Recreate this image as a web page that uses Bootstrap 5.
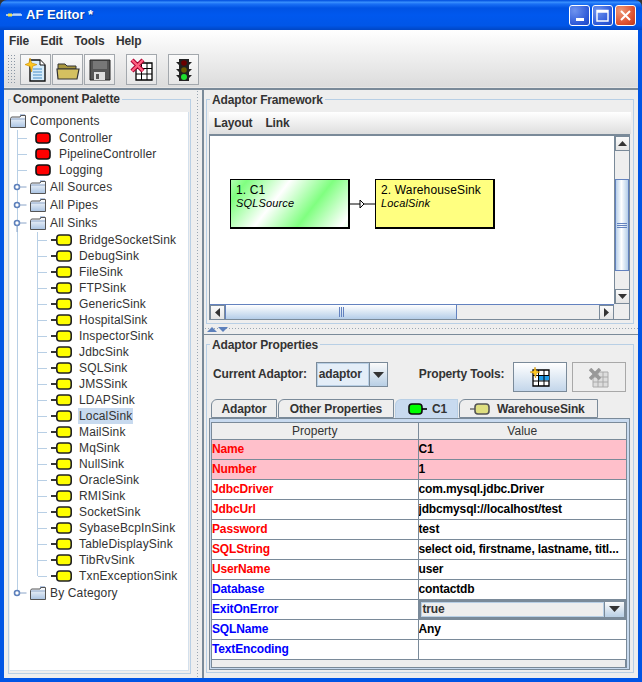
<!DOCTYPE html>
<html lang="en">
<head>
  <meta charset="UTF-8" />
  <meta name="viewport" content="width=device-width, initial-scale=1.0" />
  <title>AF Editor *</title>
  <link href="https://cdn.jsdelivr.net/npm/bootstrap@5.3.0/dist/css/bootstrap.min.css" rel="stylesheet">
  <style>
    html, body { margin: 0; background: #333; overflow: hidden; }
    body { font: 12px/16px "Liberation Sans", Arial, sans-serif; color: #333; }
    .app { width: 642px; height: 682px; }

    /* title bar */
    .titlebar {
      height: 30px; padding: 0 6px; color: #fff; border-radius: 7px 7px 0 0;
      background: linear-gradient(#0a5ae4 0, #0a5ae4 1px, #3d95ff 2px, #1a70f5 4px, #0053e4 8px, #0058ee 50%, #0056e8 85%, #0046c4 100%);
    }
    .title-text { font-size: 13px; font-weight: 700; margin-left: 4px; text-shadow: 1px 1px 0 #003a9e; }
    .win-btn {
      width: 21px; height: 21px; border: 1px solid #fff; border-radius: 3px; margin-left: 2px; padding: 0;
      background: radial-gradient(circle at 25% 25%, #6f93ee, #2c58d8 70%, #2048c0);
    }
    .win-btn.close { background: radial-gradient(circle at 25% 25%, #ee9a78, #dc5030 65%, #b93818); }

    /* window client area */
    .client { border: solid #0055e5; border-width: 0 4px 4px; background: #eee; height: 652px; }
    .top-bars { background: linear-gradient(#fff, #f6f6f6 25%, #dcdcdc 98%, #eee); border-bottom: 2px solid #7a8a99; height: 60px; }
    .menubar { height: 22px; padding-left: 5px; gap: 11.5px; }
    .menubar .nav-link, .pane-menu .nav-link { padding: 0; color: #333; font-weight: 700; font-size: 12px; letter-spacing: -.15px; }
    .toolbar { height: 36px; padding: 2px 0 0 3px; }
    .grip { width: 9px; height: 31px; margin-right: 4px; background: radial-gradient(circle, #8a96a4 40%, transparent 45%) 0 0/3px 3px; }
    .tool-btn {
      width: 31px; height: 31px; padding: 0; margin-right: 1px; border: 1px solid #a3a8ad; border-radius: 0;
      background: linear-gradient(#fafafa, #e6e6e6);
    }
    .tool-btn.spaced { margin-left: 10px; }

    /* titled borders */
    .titled { border: 1px solid #b8cfe5; }
    .titled-label { display: block; width: fit-content; margin: -9px 0 0 1px; padding: 0 2px; background: #eee; font-weight: 700; font-size: 12px; line-height: 16px; letter-spacing: -.15px; }
    .right .titled-label { margin-top: -8px; }

    /* left palette */
    .palette { width: 189px; padding: 9px 2px 4px 4px; }
    .palette .titled { height: 575px; padding: 0 1px 2px 1px; }
    .tree { background: #fff; height: 559px; margin-top: 5px; font-size: 12px; letter-spacing: .15px; border: solid #d4e0ec; border-width: 0 1px 1px 0; }
    .tree-row { height: 16px; }
    .tree-row.tall { height: 18px; }
    .tree-row span { line-height: 16px; padding: 0 1px; }
    /* tree guide lines drawn as backgrounds */
    .g-leaf {
      padding-left: 25px;
      background:
        linear-gradient(#b8cfe5, #b8cfe5) 7px 0/1px 100% no-repeat,
        linear-gradient(#b8cfe5, #b8cfe5) 8px 50%/9px 1px no-repeat;
    }
    .g-folder { padding-left: 20px; background: linear-gradient(#b8cfe5, #b8cfe5) 7px 0/1px 100% no-repeat; }
    .g-sink {
      padding-left: 41px;
      background:
        linear-gradient(#b8cfe5, #b8cfe5) 7px 0/1px 100% no-repeat,
        linear-gradient(#b8cfe5, #b8cfe5) 27px 0/1px 100% no-repeat,
        linear-gradient(#b8cfe5, #b8cfe5) 28px 50%/9px 1px no-repeat;
    }
    .g-sink.last {
      background:
        linear-gradient(#b8cfe5, #b8cfe5) 7px 0/1px 100% no-repeat,
        linear-gradient(#b8cfe5, #b8cfe5) 27px 0/1px 50% no-repeat,
        linear-gradient(#b8cfe5, #b8cfe5) 28px 50%/9px 1px no-repeat;
    }
    .g-last { padding-left: 20px; background: linear-gradient(#b8cfe5, #b8cfe5) 7px 0/1px 50% no-repeat; }
    .tree-ic { flex: none; }
    .folder-ic { margin-right: 3px; }
    .pill-ic { margin-right: 7px; }
    .g-sink .pill-ic { margin-right: 6px; }
    .handle { margin-left: -17px; margin-right: 2px; }
    .selected { background: #c8daef; }

    /* splitters */
    .split-v { width: 9px; background: radial-gradient(circle, #9aa6b2 40%, transparent 45%) 3px 0/3px 3px repeat-y; }
    .split-h { height: 10px; margin-top: 1px; padding: 0 0 0 3px; border-bottom: 1px solid #7a8a99; background: radial-gradient(circle, #9aa6b2 40%, transparent 45%) 0 2px/3px 3px repeat-x; background-color: #eee; }

    /* right side */
    .right { width: 436px; border-left: 2px solid #7a8a99; }
    .framework { margin: 9px 4px 0 2px; height: 225px; padding: 0 2px 3px 2px; }
    .pane-menu { height: 22px; margin-top: 4px; padding-left: 5px; gap: 13px; background: linear-gradient(#fff, #dedede); }
    .canvas-box { width: 421px; height: 186px; border: solid #7a8a99; border-width: 2px 1px 1px 1px; }
    .canvas { position: relative; background: #fff; width: 405px; height: 168px; }
    .node { position: absolute; top: 43px; width: 120px; height: 50px; padding: 3px 5px; border: 1px solid #000; border-width: 1px 2px 2px 1px; color: #000; letter-spacing: .15px; }
    .node div { font-size: 12px; line-height: 14px; }
    .node i { display: block; font-size: 11px; line-height: 12px; }
    .node-green { left: 20px; background: repeating-linear-gradient(128deg, #fff -21px, #80ff80 13px, #fff 47px); }
    .node-yellow { left: 165px; background: #ffff80; }
    .link { position: absolute; left: 140px; top: 60px; }
    .sb-btn { width: 15px; height: 15px; background: linear-gradient(#fafafa, #e4e4e4); border: 1px solid #7a8a99; flex: none; }
    .sb-v { width: 15px; height: 168px; border-left: 1px solid #7a8a99; }
    .sb-gap { height: 28px; }
    .sb-h { height: 15px; border-top: 1px solid #6382bf; width: 404px; }
    .thumb-v { height: 92px; background: linear-gradient(90deg, #b8d0ea, #fff 45%, #b4cde8); border: 1px solid #6382bf; }
    .thumb-h { width: 232px; background: linear-gradient(#fff, #b4cde8); border: 1px solid #6382bf; border-width: 0 1px; }

    .properties { margin: 9px 4px 0 2px; height: 329px; padding: 0 2px 2px 2px; }
    .prop-tools { height: 30px; margin-top: 9px; padding-left: 4px; font-weight: 700; font-size: 12px; line-height: 25px; letter-spacing: -.15px; }
    .combo { height: 25px; width: 72px; border: 1px solid #7a8a99; background: #e4eef8; margin: 0 31px 0 9px; }
    .combo > span { flex: 1; border: 1px solid #b8cfe5; padding-left: 1px; line-height: 21px; }
    .combo-arrow { width: 18px; border-left: 1px solid #7a8a99; background: linear-gradient(#fafafa, #b8cfe5); }
    .prop-btn { width: 54px; height: 30px; padding: 0; border: 1px solid #7a8a99; border-radius: 0; background: linear-gradient(#fff, #c3d6ea); margin-left: 5px; }
    .prop-btn.off { border-color: #a8a8a8; background: #eee; opacity: 1; }
    .prop-btn:first-of-type { margin-left: 9px; }

    .nav-tabs.prop-tabs { border: 0; height: 19px; margin: 7px 0 0 2px; gap: 1px; flex-wrap: nowrap; }
    .prop-tabs .nav-link {
      height: 19px; padding: 0; font-weight: 700; font-size: 12px; line-height: 18px; color: #333; white-space: nowrap; letter-spacing: -.15px; text-align: center;
      border: 1px solid #7a8a99; border-radius: 6px 0 0 0; background: #eee; margin: 0;
    }
    .prop-tabs .nav-link.active { background: #c8daef; color: #333; border-color: #b8cfe5 #b8cfe5 #c8daef; }
    .tab-adaptor { width: 66px; }
    .tab-other { width: 116px; }
    .prop-tabs .tab-c1 { width: 63px; padding-left: 12px; }
    .prop-tabs .tab-sink { width: 139px; padding-left: 10px; }
    .tab-c1 span { margin-left: 5px; }
    .tab-sink span { margin-left: 7px; }
    .tab-pane-box { width: 421px; height: 252px; border: 1px solid #7a8a99; background: #c8daef; padding: 3px 2px 2px 1px; }
    .table-wrap { height: 246px; border: 1px solid #7a8a99; border-width: 1px 2px 1px 1px; background: #eee; width: 416px; }
    .prop-table { width: 414px; table-layout: fixed; --bs-table-border-color: #7a8a99; --bs-table-bg: #fff; margin: 0; vertical-align: middle; }
    .prop-table thead tr { border-top-width: 0; }
    .prop-table th { height: 16px; padding: 0; font-weight: 400; text-align: center; background: #eee; color: #333; font-size: 12px; line-height: 15px; }
    .prop-table td { height: 20px; padding: 0; font-weight: 700; font-size: 12px; line-height: 18px; color: #000; white-space: nowrap; overflow: hidden; letter-spacing: -.15px; }
    .prop-table tr > :first-child { border-left-width: 0; }
    .prop-table tr > :last-child { border-right-width: 0; }
    .prop-table td.req { color: #f00; }
    .prop-table td.opt { color: #00f; }
    .prop-table tr.key td { background: #ffc0cb; }
    .col-name { width: 206px; }
    .cell-combo { height: 19px; border: 2px solid #7a8a99; background: #eee; color: #333; }
    .cell-combo span { flex: 1; border: 1px solid #b8cfe5; padding-left: 1px; line-height: 13px; }
    .cell-combo .combo-arrow { flex: none; width: 20px; border-left: 1px solid #7a8a99; }
  </style>
</head>
<body>
<!-- shared icons -->
<svg width="0" height="0" class="d-block">
  <defs>
    <linearGradient id="fold" x1="0" y1="0" x2="0" y2="1"><stop offset="0" stop-color="#fff"/><stop offset="1" stop-color="#a9c3e2"/></linearGradient>
  </defs>
  <symbol id="folder" viewBox="0 0 16 14">
    <path d="M10 0.5h5v2h-5z" fill="#6f8fc0"/>
    <path d="M0.5 4.5L1.5 3h8.500l1-1.500h4.500v12h-15z" fill="url(#fold)" stroke="#555"/>
    <path d="M1 5h14" stroke="#8aa4c8"/>
  </symbol>
  <symbol id="pill-red" viewBox="0 0 16 12"><rect x="1" y="1" width="14" height="10" rx="3" fill="#f00" stroke="#111" stroke-width="1.6"/></symbol>
  <symbol id="pill-yellow" viewBox="0 0 21 12">
    <path d="M0 6h5" stroke="#000" stroke-width="1.6"/>
    <rect x="5.8" y="1" width="14.4" height="10" rx="3" fill="#ff0" stroke="#222" stroke-width="1.6"/>
  </symbol>
  <symbol id="h-closed" viewBox="0 0 15 10">
    <circle cx="4" cy="5" r="2.5" fill="#fff" stroke="#5d80bb" stroke-width="1.6"/><path d="M6.500 5h7" stroke="#8aa4c8"/>
  </symbol>
  <symbol id="h-open" viewBox="0 0 15 18">
    <circle cx="4" cy="9" r="2.5" fill="#fff" stroke="#5d80bb" stroke-width="1.6"/><path d="M4 11.500v6.500M6.500 9h7" stroke="#8aa4c8"/>
  </symbol>
  <symbol id="arrow-down" viewBox="0 0 11 6"><path d="M0 0h11L5.500 6z" fill="#333"/></symbol>
</svg>

<div class="app d-flex flex-column">
  <div class="titlebar d-flex align-items-center">
    <svg width="16" height="8" viewBox="0 0 16 8"><path d="M0 4h16" stroke="#9cc3f5" stroke-width="2"/><path d="M2 4h4" stroke="#f0e050" stroke-width="3"/><path d="M7 3h8" stroke="#d8e8ff"/></svg>
    <span class="title-text">AF Editor *</span>
    <div class="ms-auto d-flex">
      <div class="win-btn d-flex align-items-end justify-content-center pb-1"><svg width="8" height="3"><rect width="8" height="3" fill="#fff"/></svg></div>
      <div class="win-btn d-flex align-items-center justify-content-center"><svg width="13" height="13"><path d="M1 1.500h11v10.500h-11zM1 3h11" fill="none" stroke="#fff" stroke-width="1.4"/></svg></div>
      <div class="win-btn close d-flex align-items-center justify-content-center"><svg width="13" height="13"><path d="M2 2l9 9M11 2l-9 9" stroke="#fff" stroke-width="2"/></svg></div>
    </div>
  </div>

  <div class="client d-flex flex-column">
    <div class="top-bars">
      <ul class="nav menubar align-items-center">
        <li class="nav-item"><a class="nav-link" href="#">File</a></li>
        <li class="nav-item"><a class="nav-link" href="#">Edit</a></li>
        <li class="nav-item"><a class="nav-link" href="#">Tools</a></li>
        <li class="nav-item"><a class="nav-link" href="#">Help</a></li>
      </ul>
      <div class="toolbar d-flex">
        <div class="grip"></div>
        <button class="btn tool-btn">
          <svg width="24" height="26" viewBox="0 0 24 26"><path d="M6 3h10l5 5v16h-15z" fill="#d6ecfa" stroke="#111" stroke-width="1.4"/><path d="M16 3v5h5" fill="#fff" stroke="#111"/><path d="M9 12h9M9 15h9M9 18h9M9 21h9" stroke="#4a90c8"/><path d="M6 1l1.600 5L13 7.600 8.600 9.200 7.600 15 6 9.400 1 7.600 5 6z" fill="#ffc820" stroke="#c88a00" stroke-width=".6"/></svg>
        </button>
        <button class="btn tool-btn">
          <svg width="24" height="22" viewBox="0 0 24 22"><path d="M2 5h7l2 2h9v3h-18z" fill="#a8963e" stroke="#333"/><path d="M1 10h22l-2 10h-19z" fill="#d4c060" stroke="#333" stroke-width="1.2"/></svg>
        </button>
        <button class="btn tool-btn">
          <svg width="24" height="24" viewBox="0 0 24 24"><path d="M2 2h20v20h-20z" fill="#555" stroke="#222"/><path d="M5 3h14v8h-14z" fill="#777"/><path d="M6 14h11v8h-11z" fill="#ddd"/><path d="M8 16h3v5h-3z" fill="#555"/></svg>
        </button>
        <button class="btn tool-btn spaced">
          <svg width="24" height="24" viewBox="0 0 24 24"><path d="M6 5h16v17h-16z" fill="#fff" stroke="#000" stroke-width="1.3"/><path d="M6 10.500h16M6 16h16M11.500 5v17M17 5v17" stroke="#000"/><path d="M2 2l11 11M13 2l-11 11" stroke="#a80030" stroke-width="4.4"/><path d="M2 2l11 11M13 2l-11 11" stroke="#ff6080" stroke-width="2.4"/></svg>
        </button>
        <button class="btn tool-btn spaced">
          <svg width="18" height="24" viewBox="0 0 18 24"><path d="M4 1h10v22h-10z" fill="#222"/><path d="M1 4h3l0 3zM17 4h-3v3zM1 11h3v3zM17 11h-3v3zM1 17h3v3zM17 17h-3v3z" fill="#222"/><circle cx="9" cy="5" r="2.8" fill="#6a0000"/><circle cx="9" cy="12" r="2.8" fill="#6a5a00"/><circle cx="9" cy="19" r="3" fill="#20e030"/></svg>
        </button>
      </div>
    </div>

    <div class="d-flex flex-grow-1">
      <div class="palette">
        <div class="titled">
          <span class="titled-label">Component Palette</span>
          <div class="tree">
            <div class="tree-row tall d-flex align-items-center"><svg class="tree-ic folder-ic" width="16" height="14"><use href="#folder"/></svg><span>Components</span></div>
            <div class="tree-row g-leaf d-flex align-items-center"><svg class="tree-ic pill-ic" width="16" height="12"><use href="#pill-red"/></svg><span>Controller</span></div>
            <div class="tree-row g-leaf d-flex align-items-center"><svg class="tree-ic pill-ic" width="16" height="12"><use href="#pill-red"/></svg><span>PipelineController</span></div>
            <div class="tree-row g-leaf d-flex align-items-center"><svg class="tree-ic pill-ic" width="16" height="12"><use href="#pill-red"/></svg><span>Logging</span></div>
            <div class="tree-row tall g-folder d-flex align-items-center"><svg class="tree-ic handle" width="15" height="10"><use href="#h-closed"/></svg><svg class="tree-ic folder-ic" width="16" height="14"><use href="#folder"/></svg><span>All Sources</span></div>
            <div class="tree-row tall g-folder d-flex align-items-center"><svg class="tree-ic handle" width="15" height="10"><use href="#h-closed"/></svg><svg class="tree-ic folder-ic" width="16" height="14"><use href="#folder"/></svg><span>All Pipes</span></div>
            <div class="tree-row tall g-folder d-flex align-items-center"><svg class="tree-ic handle" width="15" height="18"><use href="#h-open"/></svg><svg class="tree-ic folder-ic" width="16" height="14"><use href="#folder"/></svg><span>All Sinks</span></div>
            <div class="tree-row g-sink d-flex align-items-center"><svg class="tree-ic pill-ic" width="21" height="12"><use href="#pill-yellow"/></svg><span>BridgeSocketSink</span></div>
            <div class="tree-row g-sink d-flex align-items-center"><svg class="tree-ic pill-ic" width="21" height="12"><use href="#pill-yellow"/></svg><span>DebugSink</span></div>
            <div class="tree-row g-sink d-flex align-items-center"><svg class="tree-ic pill-ic" width="21" height="12"><use href="#pill-yellow"/></svg><span>FileSink</span></div>
            <div class="tree-row g-sink d-flex align-items-center"><svg class="tree-ic pill-ic" width="21" height="12"><use href="#pill-yellow"/></svg><span>FTPSink</span></div>
            <div class="tree-row g-sink d-flex align-items-center"><svg class="tree-ic pill-ic" width="21" height="12"><use href="#pill-yellow"/></svg><span>GenericSink</span></div>
            <div class="tree-row g-sink d-flex align-items-center"><svg class="tree-ic pill-ic" width="21" height="12"><use href="#pill-yellow"/></svg><span>HospitalSink</span></div>
            <div class="tree-row g-sink d-flex align-items-center"><svg class="tree-ic pill-ic" width="21" height="12"><use href="#pill-yellow"/></svg><span>InspectorSink</span></div>
            <div class="tree-row g-sink d-flex align-items-center"><svg class="tree-ic pill-ic" width="21" height="12"><use href="#pill-yellow"/></svg><span>JdbcSink</span></div>
            <div class="tree-row g-sink d-flex align-items-center"><svg class="tree-ic pill-ic" width="21" height="12"><use href="#pill-yellow"/></svg><span>SQLSink</span></div>
            <div class="tree-row g-sink d-flex align-items-center"><svg class="tree-ic pill-ic" width="21" height="12"><use href="#pill-yellow"/></svg><span>JMSSink</span></div>
            <div class="tree-row g-sink d-flex align-items-center"><svg class="tree-ic pill-ic" width="21" height="12"><use href="#pill-yellow"/></svg><span>LDAPSink</span></div>
            <div class="tree-row g-sink d-flex align-items-center"><svg class="tree-ic pill-ic" width="21" height="12"><use href="#pill-yellow"/></svg><span class="selected">LocalSink</span></div>
            <div class="tree-row g-sink d-flex align-items-center"><svg class="tree-ic pill-ic" width="21" height="12"><use href="#pill-yellow"/></svg><span>MailSink</span></div>
            <div class="tree-row g-sink d-flex align-items-center"><svg class="tree-ic pill-ic" width="21" height="12"><use href="#pill-yellow"/></svg><span>MqSink</span></div>
            <div class="tree-row g-sink d-flex align-items-center"><svg class="tree-ic pill-ic" width="21" height="12"><use href="#pill-yellow"/></svg><span>NullSink</span></div>
            <div class="tree-row g-sink d-flex align-items-center"><svg class="tree-ic pill-ic" width="21" height="12"><use href="#pill-yellow"/></svg><span>OracleSink</span></div>
            <div class="tree-row g-sink d-flex align-items-center"><svg class="tree-ic pill-ic" width="21" height="12"><use href="#pill-yellow"/></svg><span>RMISink</span></div>
            <div class="tree-row g-sink d-flex align-items-center"><svg class="tree-ic pill-ic" width="21" height="12"><use href="#pill-yellow"/></svg><span>SocketSink</span></div>
            <div class="tree-row g-sink d-flex align-items-center"><svg class="tree-ic pill-ic" width="21" height="12"><use href="#pill-yellow"/></svg><span>SybaseBcpInSink</span></div>
            <div class="tree-row g-sink d-flex align-items-center"><svg class="tree-ic pill-ic" width="21" height="12"><use href="#pill-yellow"/></svg><span>TableDisplaySink</span></div>
            <div class="tree-row g-sink d-flex align-items-center"><svg class="tree-ic pill-ic" width="21" height="12"><use href="#pill-yellow"/></svg><span>TibRvSink</span></div>
            <div class="tree-row g-sink last d-flex align-items-center"><svg class="tree-ic pill-ic" width="21" height="12"><use href="#pill-yellow"/></svg><span>TxnExceptionSink</span></div>
            <div class="tree-row tall g-last d-flex align-items-center"><svg class="tree-ic handle" width="15" height="10"><use href="#h-closed"/></svg><svg class="tree-ic folder-ic" width="16" height="14"><use href="#folder"/></svg><span>By Category</span></div>
          </div>
        </div>
      </div>

      <div class="split-v"></div>

      <div class="right d-flex flex-column">
        <div class="titled framework">
          <span class="titled-label">Adaptor Framework</span>
          <ul class="nav pane-menu align-items-center">
            <li class="nav-item"><a class="nav-link" href="#">Layout</a></li>
            <li class="nav-item"><a class="nav-link" href="#">Link</a></li>
          </ul>
          <div class="canvas-box">
            <div class="d-flex">
              <div class="canvas">
                <div class="node node-green"><div>1. C1</div><i>SQLSource</i></div>
                <svg class="link" width="26" height="16" viewBox="0 0 26 16"><path d="M0 8h25" stroke="#000"/><path d="M10 4v8l4-4z" fill="#fff" stroke="#000"/></svg>
                <div class="node node-yellow"><div>2. WarehouseSink</div><i>LocalSink</i></div>
              </div>
              <div class="sb-v d-flex flex-column">
                <div class="sb-btn d-flex align-items-center justify-content-center"><svg width="9" height="5"><path d="M0 5h9L4.500 0z" fill="#333"/></svg></div>
                <div class="sb-gap"></div>
                <div class="thumb-v d-flex align-items-center justify-content-center"><svg width="10" height="5"><path d="M0 .5h10M0 2.500h10M0 4.500h10" stroke="#6382bf"/></svg></div>
                <div class="flex-grow-1"></div>
                <div class="sb-btn d-flex align-items-center justify-content-center"><svg width="9" height="5"><use href="#arrow-down"/></svg></div>
              </div>
            </div>
            <div class="sb-h d-flex">
              <div class="sb-btn d-flex align-items-center justify-content-center"><svg width="5" height="9"><path d="M5 0v9L0 4.500z" fill="#333"/></svg></div>
              <div class="thumb-h d-flex align-items-center justify-content-center"><svg width="5" height="10"><path d="M.5 0v10M2.500 0v10M4.500 0v10" stroke="#6382bf"/></svg></div>
              <div class="flex-grow-1"></div>
              <div class="sb-btn d-flex align-items-center justify-content-center"><svg width="5" height="9"><path d="M0 0v9l5-4.500z" fill="#333"/></svg></div>
            </div>
          </div>
        </div>

        <div class="split-h d-flex align-items-center">
          <svg width="21" height="5" viewBox="0 0 21 5"><path d="M0 5h10L5 0z" fill="#5d80bb"/><path d="M11 0h10l-5 5z" fill="#5d80bb"/></svg>
        </div>

        <div class="titled properties">
          <span class="titled-label">Adaptor Properties</span>
          <div class="prop-tools d-flex">
            <span>Current Adaptor:</span>
            <div class="combo d-flex">
              <span>adaptor</span>
              <div class="combo-arrow d-flex align-items-center justify-content-center"><svg width="11" height="6"><use href="#arrow-down"/></svg></div>
            </div>
            <span>Property Tools:</span>
            <button class="btn prop-btn">
              <svg width="20" height="22" viewBox="0 0 20 22"><path d="M3 3h16v16h-16z" fill="#fff" stroke="#000" stroke-width="1.3"/><path d="M8.500 8.500h10.500v5h-10.500z" fill="#1e9be8"/><path d="M3 8.500h16M3 14h16M8.500 3v16M14 3v16" stroke="#000"/><path d="M5 0l1.300 4L10 5 6.500 6.200 5.500 11 4 6.500 0 5l3.800-1z" fill="#ffc820" stroke="#c88a00" stroke-width=".5"/></svg>
            </button>
            <button class="btn prop-btn off" disabled>
              <svg width="20" height="20" viewBox="0 0 20 20"><path d="M4 4h15v15h-15z" fill="#ddd" stroke="#aaa"/><path d="M4 9h15M4 14h15M9 4v15M14 4v15" stroke="#aaa"/><path d="M1 1l10 10M11 1l-10 10" stroke="#999" stroke-width="3.500"/></svg>
            </button>
          </div>

          <ul class="nav nav-tabs prop-tabs">
            <li class="nav-item"><a class="nav-link tab-adaptor" href="#">Adaptor</a></li>
            <li class="nav-item"><a class="nav-link tab-other" href="#">Other Properties</a></li>
            <li class="nav-item">
              <a class="nav-link active tab-c1 d-flex align-items-center" href="#">
                <svg width="19" height="12" viewBox="0 0 19 12"><rect x="1" y="1" width="13" height="10" rx="3" fill="#0f0" stroke="#111" stroke-width="1.600"/><path d="M14 6h5" stroke="#000" stroke-width="1.600"/></svg><span>C1</span>
              </a>
            </li>
            <li class="nav-item">
              <a class="nav-link tab-sink d-flex align-items-center" href="#">
                <svg width="20" height="12" viewBox="0 0 20 12"><path d="M0 6h5" stroke="#777" stroke-width="1.600"/><rect x="5" y="1" width="14" height="10" rx="3" fill="#dfdf80" stroke="#555" stroke-width="1.600"/></svg><span>WarehouseSink</span>
              </a>
            </li>
          </ul>
          <div class="tab-pane-box">
            <div class="table-wrap">
              <table class="table table-bordered prop-table">
                <colgroup><col class="col-name"><col></colgroup>
                <thead><tr><th>Property</th><th>Value</th></tr></thead>
                <tbody>
                  <tr class="key"><td class="req">Name</td><td>C1</td></tr>
                  <tr class="key"><td class="req">Number</td><td>1</td></tr>
                  <tr><td class="req">JdbcDriver</td><td>com.mysql.jdbc.Driver</td></tr>
                  <tr><td class="req">JdbcUrl</td><td>jdbcmysql://localhost/test</td></tr>
                  <tr><td class="req">Password</td><td>test</td></tr>
                  <tr><td class="req">SQLString</td><td>select oid, firstname, lastname, titl...</td></tr>
                  <tr><td class="req">UserName</td><td>user</td></tr>
                  <tr><td class="opt">Database</td><td>contactdb</td></tr>
                  <tr><td class="opt">ExitOnError</td><td><div class="cell-combo d-flex"><span>true</span><div class="combo-arrow d-flex align-items-center justify-content-center"><svg width="11" height="6"><use href="#arrow-down"/></svg></div></div></td></tr>
                  <tr><td class="opt">SQLName</td><td>Any</td></tr>
                  <tr><td class="opt">TextEncoding</td><td></td></tr>
                </tbody>
              </table>
            </div>
          </div>
        </div>
      </div>
    </div>
  </div>
</div>
<script src="https://cdn.jsdelivr.net/npm/bootstrap@5.3.0/dist/js/bootstrap.bundle.min.js"></script>
</body>
</html>
